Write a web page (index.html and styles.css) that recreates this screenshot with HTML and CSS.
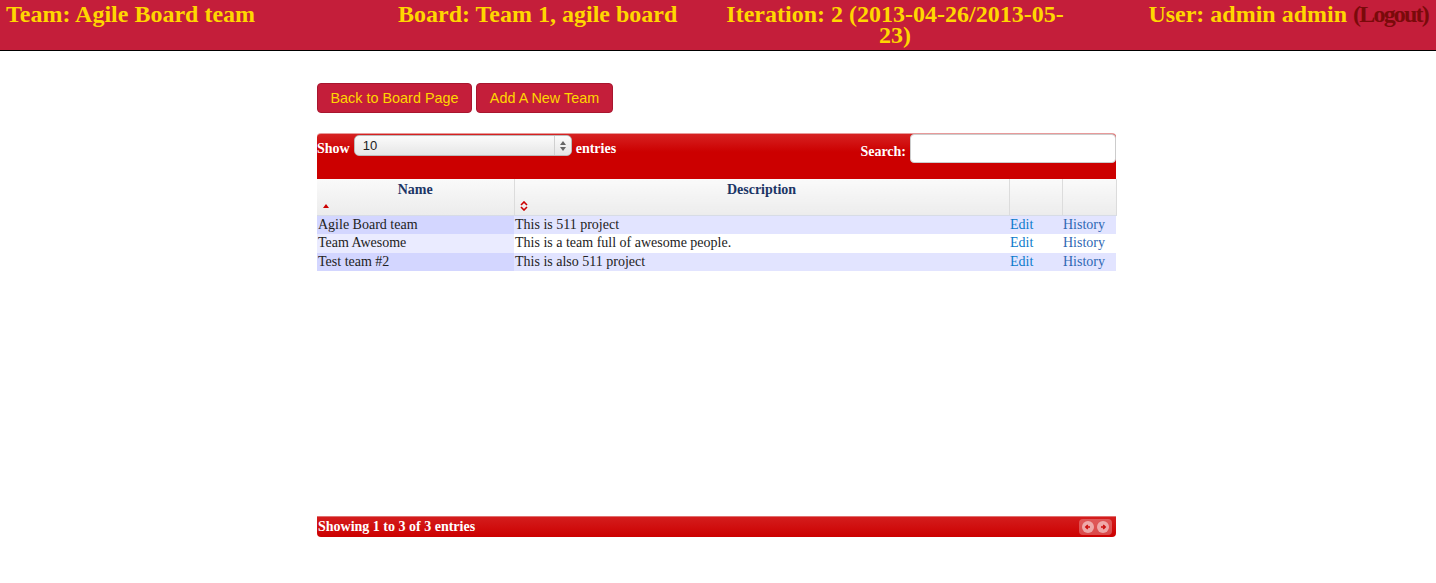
FILE: index.html
```html
<!DOCTYPE html>
<html>
<head>
<meta charset="utf-8">
<title>Teams</title>
<link rel="stylesheet" href="styles.css">
</head>
<body>
<header class="topbar">
  <div class="tb-item tb-team">Team: Agile Board team</div>
  <div class="tb-item tb-board">Board: Team 1, agile board</div>
  <div class="tb-item tb-iter">Iteration: 2 (2013-04-26/2013-05-23)</div>
  <div class="tb-item tb-user">User: admin admin <a class="logout" href="#">(Logout)</a></div>
</header>

<main class="main">
  <div class="actions">
    <button class="btn btn-back">Back to Board Page</button>
    <button class="btn btn-add">Add A New Team</button>
  </div>

  <div class="dt">
    <div class="dt-toolbar">
      <div class="dt-length">
        <span class="dt-text">Show</span>
        <span class="fake-select"><span class="fs-val">10</span><span class="fs-arrows"><svg width="8" height="12" viewBox="0 0 8 12"><path d="M4 1 L7 5 H1 Z" fill="#666"/><path d="M4 11 L7 7 H1 Z" fill="#666"/></svg></span></span>
        <span class="dt-text">entries</span>
      </div>
      <div class="dt-search">
        <span class="search-label">Search:</span>
        <input class="search-input" type="text">
      </div>
    </div>
    <div class="dt-body">
      <table class="grid">
        <colgroup>
          <col class="c-name"><col class="c-desc"><col class="c-edit"><col class="c-hist">
        </colgroup>
        <thead>
          <tr>
            <th><div class="th-label">Name</div><div class="th-icon"><svg width="8" height="6" viewBox="0 0 8 6"><path d="M4 1 L7 5 H1 Z" fill="#cc0000"/></svg></div></th>
            <th><div class="th-label">Description</div><div class="th-icon"><svg width="8" height="10" viewBox="0 0 8 10"><path d="M1 4 L4 1 L7 4" fill="none" stroke="#cc0000" stroke-width="1.6"/><path d="M1 6 L4 9 L7 6" fill="none" stroke="#cc0000" stroke-width="1.6"/></svg></div></th>
            <th></th>
            <th></th>
          </tr>
        </thead>
        <tbody>
          <tr class="odd">
            <td class="sorted">Agile Board team</td>
            <td>This is 511 project</td>
            <td><a class="lnk-edit" href="#">Edit</a></td>
            <td><a class="lnk-hist" href="#">History</a></td>
          </tr>
          <tr class="even">
            <td class="sorted">Team Awesome</td>
            <td>This is a team full of awesome people.</td>
            <td><a class="lnk-edit" href="#">Edit</a></td>
            <td><a class="lnk-hist" href="#">History</a></td>
          </tr>
          <tr class="odd">
            <td class="sorted">Test team #2</td>
            <td>This is also 511 project</td>
            <td><a class="lnk-edit" href="#">Edit</a></td>
            <td><a class="lnk-hist" href="#">History</a></td>
          </tr>
        </tbody>
      </table>
    </div>
    <div class="dt-footer">
      <span class="dt-info">Showing 1 to 3 of 3 entries</span>
      <span class="pager">
        <span class="pg-btn"><svg width="12" height="12" viewBox="0 0 12 12"><circle cx="6" cy="6" r="6" fill="rgba(255,255,255,0.5)"/><path d="M8 6 H4 M5.8 4 L3.8 6 L5.8 8" fill="none" stroke="#cc1010" stroke-width="1.5"/></svg></span>
        <span class="pg-btn"><svg width="12" height="12" viewBox="0 0 12 12"><circle cx="6" cy="6" r="6" fill="rgba(255,255,255,0.5)"/><path d="M4 6 H8 M6.2 4 L8.2 6 L6.2 8" fill="none" stroke="#cc1010" stroke-width="1.5"/></svg></span>
      </span>
    </div>
  </div>
</main>
</body>
</html>
```

FILE: styles.css
```css
html, body {
  margin: 0;
  padding: 0;
  background: #ffffff;
}

body {
  font-family: "Liberation Serif", "Times New Roman", serif;
  color: #222;
}

.topbar {
  display: flex;
  align-items: flex-start;
  height: 46px;
  padding: 4px 8px 0 6px;
  background: #c41e3a;
  border-bottom: 1px solid #000;
  font-weight: bold;
  font-size: 24px;
  line-height: 21px;
  color: #ffd700;
}

.tb-team {
  width: 392px;
}

.tb-board {
  width: 322px;
}

.tb-iter {
  width: 350px;
  text-align: center;
}

.tb-user {
  margin-left: auto;
  white-space: nowrap;
}

.logout {
  color: #7a0a0a;
  text-decoration: none;
  letter-spacing: -1.8px;
}

.main {
  margin-left: 317px;
  width: 799px;
  padding-top: 32px;
}

.actions {
  display: flex;
  gap: 4px;
}

.btn {
  height: 30px;
  padding: 0 12px;
  background: #c41e3a;
  border: 1px solid #a8162f;
  border-radius: 4px;
  color: #ffd700;
  font-family: "Liberation Sans", Arial, sans-serif;
  font-size: 14.4px;
  cursor: pointer;
}

.btn-back {
  width: 155px;
}

.btn-add {
  width: 137px;
}

.dt {
  margin-top: 20px;
}

.dt-toolbar {
  display: flex;
  justify-content: space-between;
  align-items: flex-start;
  height: 46px;
  background: linear-gradient(#d62222, #cc0000 40%, #cc0000);
  border-top: 1px solid #e89a9a;
  border-radius: 4px 4px 0 0;
  color: #fff;
  font-weight: bold;
  font-size: 14px;
  box-sizing: border-box;
}

.dt-length {
  display: flex;
  align-items: flex-start;
  gap: 4px;
  padding-top: 1px;
}

.dt-text {
  line-height: 16px;
  margin-top: 6px;
}

.fake-select {
  display: flex;
  align-items: center;
  width: 218px;
  height: 21px;
  background: linear-gradient(#fbfbfb, #e6e6e6);
  border: 1px solid #bbb;
  border-radius: 5px;
  box-sizing: border-box;
  color: #222;
  font-family: "Liberation Sans", Arial, sans-serif;
  font-weight: normal;
  font-size: 13px;
}

.fs-val {
  flex: 1;
  padding-left: 8px;
}

.fs-arrows {
  display: flex;
  align-items: center;
  justify-content: center;
  width: 16px;
  height: 100%;
  border-left: 1px solid #d0d0d0;
}

.dt-search {
  display: flex;
  align-items: flex-end;
  gap: 4px;
  font-size: 14px;
}

.search-label {
  line-height: 16px;
  margin-bottom: 3px;
}

.search-input {
  width: 206px;
  height: 29px;
  box-sizing: border-box;
  border: 1px solid #ccc;
  border-radius: 4px;
  margin: 0;
  background: #fff;
}

.dt-body {
  min-height: 337px;
}

.grid {
  width: 799px;
  border-collapse: collapse;
  table-layout: fixed;
  font-size: 14px;
}

.c-name { width: 197px; }
.c-desc { width: 495px; }
.c-edit { width: 53px; }
.c-hist { width: 54px; }

.grid th {
  height: 36px;
  padding: 0;
  vertical-align: top;
  background: linear-gradient(#fafafa, #ececec);
  border-left: 1px solid #dcdcdc;
  border-bottom: 1px solid #d7dce6;
  color: #1c3566;
  font-size: 14px;
  font-weight: bold;
  box-sizing: border-box;
}

.grid th:first-child {
  border-left: none;
}

.grid th:last-child {
  border-right: 1px solid #dcdcdc;
}

.th-label {
  padding-top: 3px;
  line-height: 16px;
  text-align: center;
}

.th-icon {
  display: flex;
  align-items: center;
  height: 15px;
  padding-left: 5px;
}

.grid td {
  height: 18.6px;
  padding: 0 0 0 1px;
  line-height: 16px;
  white-space: nowrap;
  overflow: hidden;
}

.grid tr.odd td {
  background: #e2e4ff;
}

.grid tr.odd td.sorted {
  background: #d3d6ff;
}

.grid tr.even td {
  background: #ffffff;
}

.grid tr.even td.sorted {
  background: #eaebff;
}

.lnk-edit {
  color: #0a7acc;
  text-decoration: none;
}

.lnk-hist {
  color: #2f68b4;
  text-decoration: none;
}

.dt-footer {
  display: flex;
  align-items: center;
  justify-content: space-between;
  height: 21px;
  background: linear-gradient(#d41d1d, #cc0000);
  border-top: 1px solid #e07070;
  border-radius: 0 0 4px 4px;
  box-sizing: border-box;
  color: #fff;
  font-weight: bold;
  font-size: 14px;
}

.dt-info {
  padding-left: 1px;
}

.pager {
  display: flex;
  align-items: center;
  gap: 3px;
  margin-right: 4px;
  padding: 2px 3px;
  background: rgba(255, 255, 255, 0.28);
  border-radius: 4px;
}

.pg-btn {
  display: flex;
}
```
